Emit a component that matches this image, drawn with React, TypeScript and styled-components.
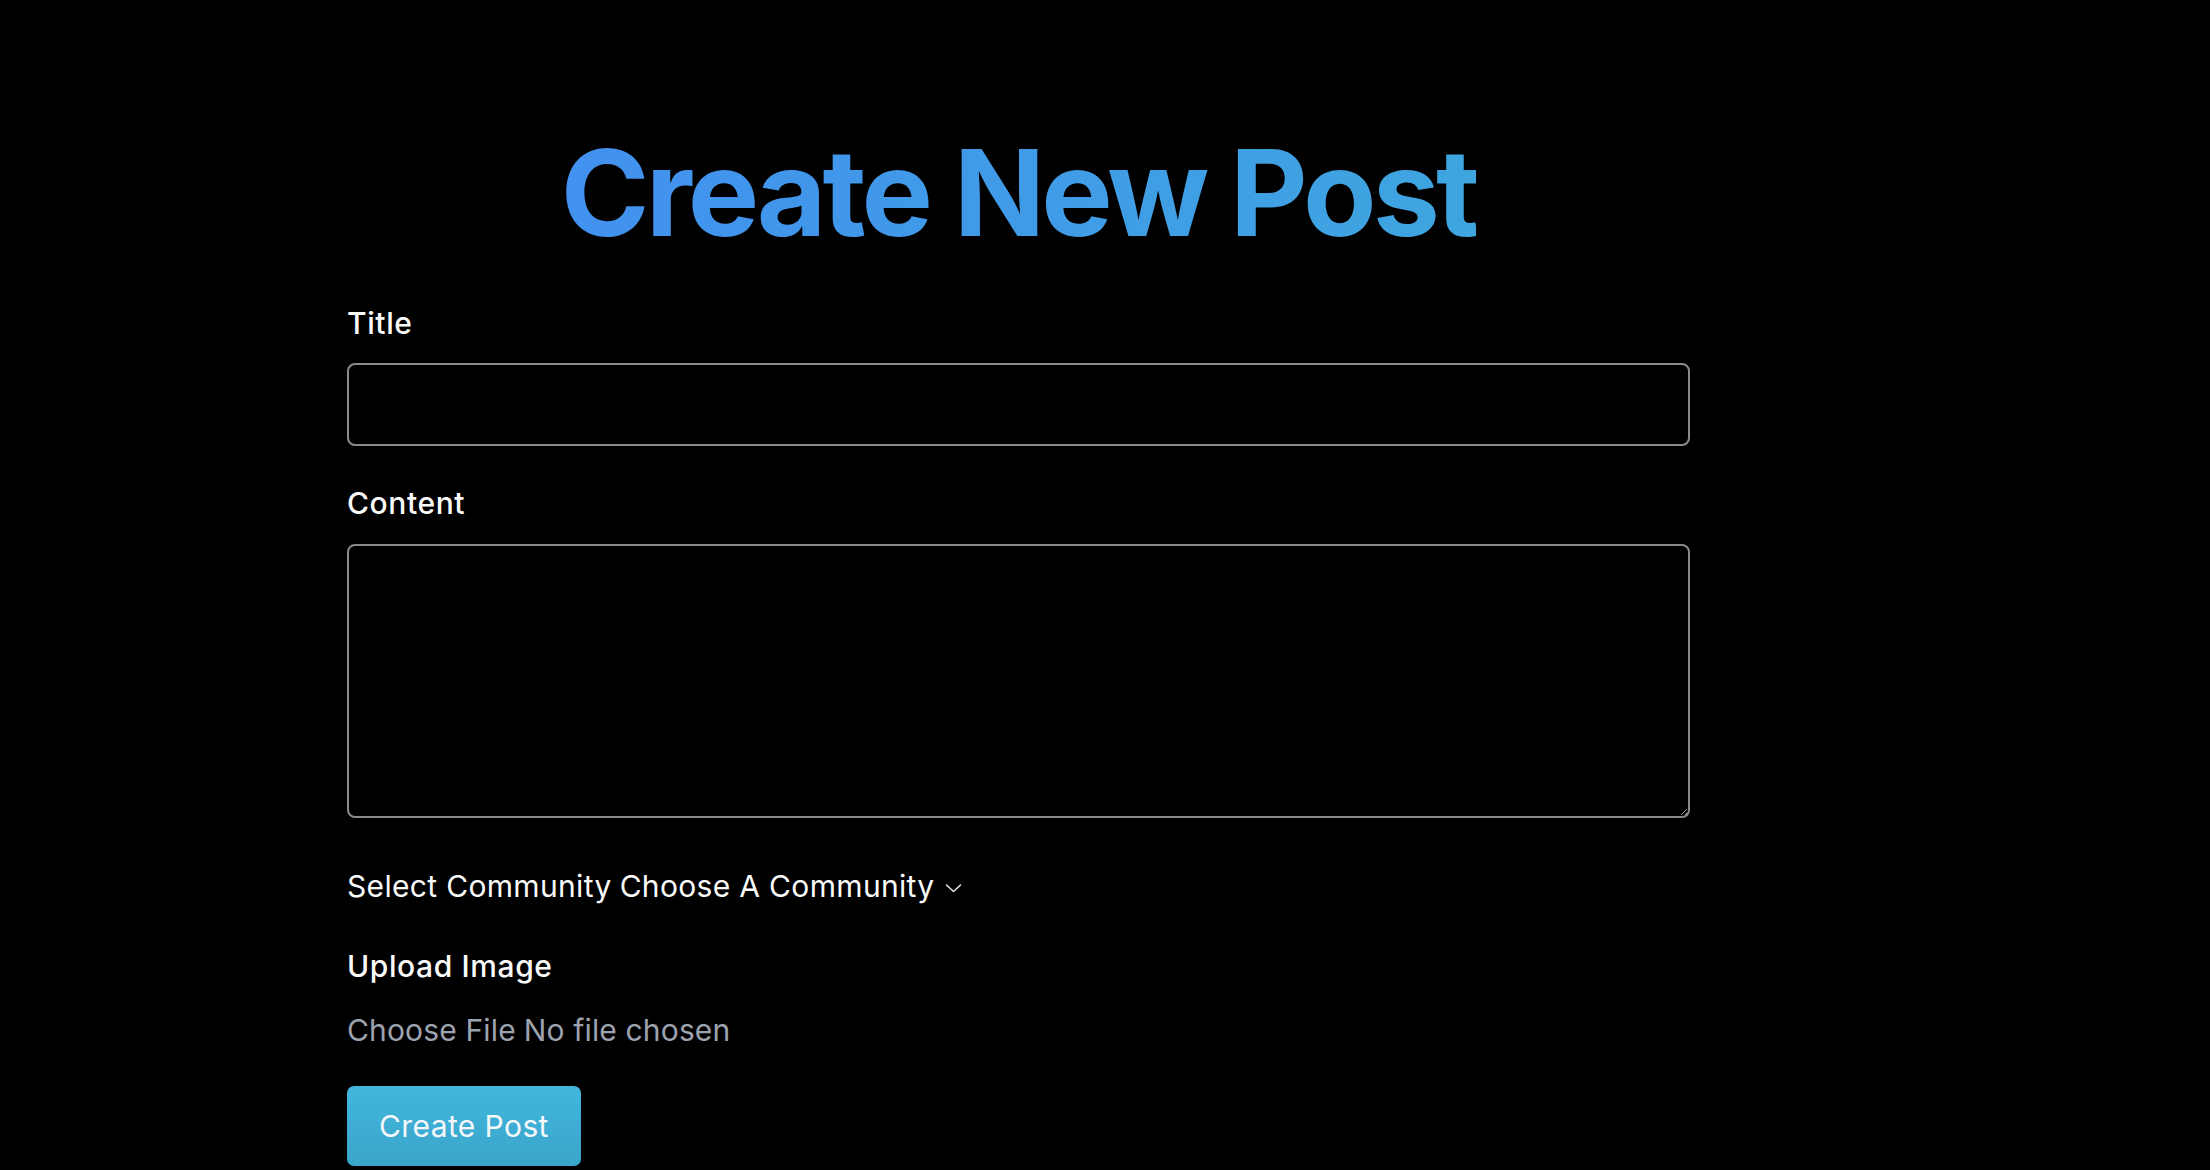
import React from 'react';
import styled, { createGlobalStyle } from 'styled-components';

const GlobalStyle = createGlobalStyle`
  html, body { margin: 0; padding: 0; background: #000; }
  body { font-family: Inter, "Noto Sans", "Liberation Sans", sans-serif; color: #fff; }
  *, *::before, *::after { box-sizing: border-box; }
`;

const Page = styled.main`
  min-height: 1170px;
  background: #000;
  padding: 133px 0 0 347px;
`;

const Form = styled.form`
  width: 1343px;
  display: flex;
  flex-direction: column;
`;

const Heading = styled.h1`
  margin: 0 0 48px;
  align-self: center;
  font-size: 120px;
  line-height: 120px;
  font-weight: 700;
  letter-spacing: -0.032em;
  background: linear-gradient(90deg, #4291ef 0%, #3ea5df 100%);
  -webkit-background-clip: text;
  background-clip: text;
  color: transparent;
`;

const Field = styled.div<{ $after: number }>`
  display: flex;
  flex-direction: column;
  margin-bottom: ${(p) => p.$after}px;
`;

const Label = styled.label<{ $below?: number }>`
  font-size: 30px;
  line-height: 45px;
  font-weight: 500;
  letter-spacing: 0.6px;
  color: #fafafa;
  margin-bottom: ${(p) => p.$below ?? 17}px;
`;

const TextInput = styled.input`
  height: 83px;
  width: 100%;
  background: #000;
  color: #fff;
  border: 2px solid #8a8a8a;
  border-radius: 8px;
  padding: 0 16px;
  font: inherit;
  font-size: 30px;
  outline: none;
`;

const TextArea = styled.textarea`
  display: block;
  height: 274px;
  width: 100%;
  background: #000;
  color: #fff;
  border: 2px solid #8a8a8a;
  border-radius: 8px;
  padding: 12px 16px;
  font: inherit;
  font-size: 30px;
  outline: none;
  resize: vertical;
`;

const SelectRow = styled.div`
  display: flex;
  align-items: center;
  font-size: 30px;
  line-height: 45px;
  letter-spacing: 0.33px;
  color: #fafafa;
  margin-bottom: 35px;
`;

const SelectLabel = styled.label`
  font-weight: 400;
  margin-right: 8px;
`;

const SelectWrap = styled.div`
  display: flex;
  align-items: center;
  gap: 10px;
`;

const Select = styled.select`
  appearance: none;
  -webkit-appearance: none;
  background: transparent;
  border: none;
  color: #fafafa;
  font: inherit;
  font-size: 30px;
  line-height: 45px;
  letter-spacing: 0.33px;
  padding: 0;
  margin: 0;
  outline: none;
`;

const Chevron = styled.svg`
  width: 17px;
  height: 10px;
  flex: none;
  margin-top: 2px;
`;

const FileInput = styled.input`
  font: inherit;
  font-size: 30px;
  line-height: 45px;
  letter-spacing: 0.15px;
  color: #9ca3af;
  margin: 0 0 33px;
  padding: 0;
  &::file-selector-button {
    font: inherit;
    letter-spacing: 0.15px;
    color: #9ca3af;
    background: none;
    border: none;
    padding: 0;
    margin: 0 8px 0 0;
  }
`;

const SubmitButton = styled.button`
  align-self: flex-start;
  height: 80px;
  padding: 0 32px;
  border: none;
  border-radius: 7px;
  background: linear-gradient(180deg, #42b6dd 0%, #3aa5ca 100%);
  color: #f5f7fa;
  font: inherit;
  font-size: 30px;
  font-weight: 400;
  letter-spacing: 0.4px;
  cursor: pointer;
`;

export default function App() {
  return (
    <>
      <GlobalStyle />
      <Page>
        <Form onSubmit={(e) => e.preventDefault()}>
          <Heading>Create New Post</Heading>

          <Field $after={35}>
            <Label htmlFor="title">Title</Label>
            <TextInput id="title" type="text" />
          </Field>

          <Field $after={46}>
            <Label htmlFor="content" $below={18}>Content</Label>
            <TextArea id="content" />
          </Field>

          <SelectRow>
            <SelectLabel htmlFor="community">Select Community</SelectLabel>
            <SelectWrap>
              <Select id="community" defaultValue="">
                <option value="">Choose A Community</option>
              </Select>
              <Chevron viewBox="0 0 17 10" fill="none">
                <path d="M1.5 2 L8.5 8.5 L15.5 2" stroke="#e5e5e5" strokeWidth="1.6" strokeLinecap="round" strokeLinejoin="round" />
              </Chevron>
            </SelectWrap>
          </SelectRow>

          <Field $after={0}>
            <Label htmlFor="image" $below={19}>Upload Image</Label>
            <FileInput id="image" type="file" accept="image/*" />
          </Field>

          <SubmitButton type="submit">Create Post</SubmitButton>
        </Form>
      </Page>
    </>
  );
}
